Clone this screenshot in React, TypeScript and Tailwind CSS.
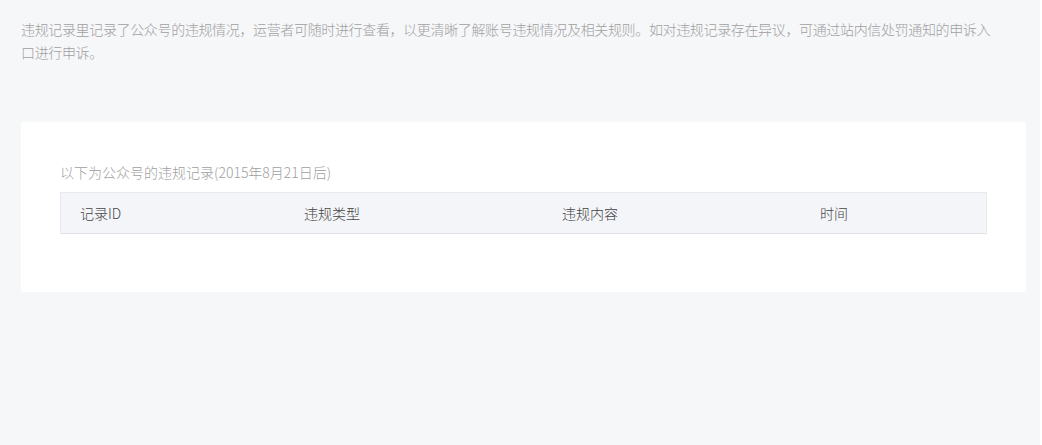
const columns = [
  { label: "记录ID" },
  { label: "违规类型" },
  { label: "违规内容" },
  { label: "时间" },
]

export default function App() {
  return (
    <div
      className="flex h-[445px] w-[1042px] bg-white font-light"
      style={{ fontFamily: '"Noto Sans CJK SC", "Noto Sans", sans-serif' }}
    >
      <div className="h-full w-[1040px] bg-[#f6f7f9] pl-[21px] pr-[14px] pt-[18px]">
        <p className="max-w-[978px] text-[14px] leading-[23px] tracking-[-0.35px] text-[#a0a0a0]">
          违规记录里记录了公众号的违规情况，运营者可随时进行查看，以更清晰了解账号违规情况及相关规则。如对违规记录存在异议，可通过站内信处罚通知的申诉入口进行申诉。
        </p>

        <div className="mt-[58px] rounded-[2px] bg-white px-[39px] pt-[40px] pb-[58px]">
          <div className="mb-[10px] text-[14px] leading-[20px] text-[#a0a0a0]">
            以下为公众号的违规记录(2015年8月21日后)
          </div>
          <div className="grid h-[42px] grid-cols-[224px_258px_258px_1fr] items-center border border-[#e9eaee] border-b-[#e2e3e8] bg-[#f4f5f9]">
            {columns.map((col) => (
              <div key={col.label} className="pl-[19px] text-[14px] text-[#444]">
                {col.label}
              </div>
            ))}
          </div>
        </div>
      </div>
    </div>
  )
}
